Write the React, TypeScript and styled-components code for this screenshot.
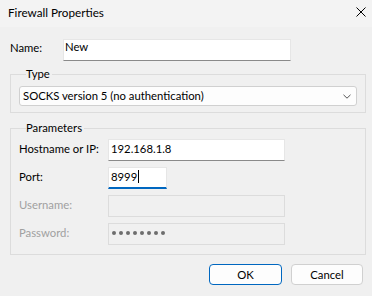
import React from "react";
import styled, { createGlobalStyle } from "styled-components";

const Global = createGlobalStyle`
  html, body { margin: 0; padding: 0; background: #f0f0f0; }
  * { box-sizing: border-box; }
  body { font-family: Lato, "Noto Sans", sans-serif; font-size: 11.3px; color: #000; }
`;

const Window = styled.div`
  width: 372px;
  height: 296px;
  background: #f0f0f0;
  display: flex;
  flex-direction: column;
  overflow: hidden;
`;

const TitleBar = styled.div`
  height: 27px;
  background: #f3f3f3;
  display: flex;
  align-items: center;
  justify-content: space-between;
  padding: 0 6px 4px 8px;
  font-size: 11.7px;
`;

const Body = styled.div`
  display: flex;
  flex-direction: column;
  padding: 12px 6px 0 10px;
`;

const NameRow = styled.div`
  display: flex;
  align-items: flex-start;
`;

const Label = styled.span<{ $w: number; $disabled?: boolean; $offset?: number }>`
  width: ${(p) => p.$w}px;
  flex: none;
  color: ${(p) => (p.$disabled ? "#a0a0a0" : "#000")};
  line-height: 14px;
  white-space: nowrap;
  padding-top: ${(p) => p.$offset ?? 0}px;
  padding-bottom: ${(p) => (p.$offset === undefined ? 2 : 0)}px;
`;

const TextBox = styled.div<{ $w: number; $disabled?: boolean; $focus?: boolean; $top?: boolean }>`
  width: ${(p) => p.$w}px;
  height: 22px;
  flex: none;
  display: flex;
  align-items: ${(p) => (p.$top ? "flex-start" : "center")};
  padding: ${(p) => (p.$top ? "0 1px" : "0 2px 2px 2px")};
  background: ${(p) => (p.$disabled ? "#f0f0f0" : "#fff")};
  border: 1px solid ${(p) => (p.$disabled ? "#dcdcdc" : "#e6e6e6")};
  border-bottom: ${(p) =>
    p.$focus ? "2px solid #0067c0" : p.$disabled ? "1px solid #dcdcdc" : "1px solid #8a8a8a"};
  color: #000;
  line-height: 14px;
  white-space: nowrap;
`;

const Caret = styled.span`
  display: inline-block;
  width: 1px;
  height: 13px;
  background: #000;
  margin-left: 1px;
`;

const Group = styled.fieldset<{ $mt: number }>`
  margin: ${(p) => p.$mt}px 0 0 0;
  padding: 0 8px 6px 8px;
  border: 1px solid #dcdcdc;
  min-width: 0;
`;

const Legend = styled.legend`
  padding: 0 2px 0 0;
  margin-left: 7px;
  line-height: 14px;
  height: 14px;
`;

const Combo = styled.div`
  margin-top: 5px;
  height: 20px;
  background: #fdfdfd;
  border: 1px solid #d0d0d0;
  border-radius: 3px;
  display: flex;
  align-items: center;
  justify-content: space-between;
  padding: 0 5px 0 3px;
  line-height: 14px;
`;

const ParamGrid = styled.div`
  margin-top: 4px;
  padding-bottom: 3px;
  display: flex;
  flex-direction: column;
  gap: 6px;
`;

const ParamRow = styled.div`
  display: flex;
  align-items: center;
`;

const Dots = styled.span`
  display: flex;
  gap: 3px;
  padding-left: 1px;
`;

const Dot = styled.span`
  width: 4px;
  height: 4px;
  border-radius: 50%;
  background: #6d6d6d;
`;

const Buttons = styled.div`
  display: flex;
  justify-content: flex-end;
  gap: 9px;
  padding: 9px 3px 0 0;
`;

const Button = styled.button<{ $primary?: boolean }>`
  width: ${(p) => (p.$primary ? 73 : 72)}px;
  height: 21px;
  font-family: inherit;
  font-size: 11.3px;
  color: #000;
  background: #fdfdfd;
  border: 1px solid ${(p) => (p.$primary ? "#0067c0" : "#d0d0d0")};
  border-radius: 4px;
  padding: 0;
  line-height: 14px;
`;

export default function App() {
  return (
    <>
      <Global />
      <Window>
        <TitleBar>
          <span>Firewall Properties</span>
          <svg width="10" height="10" viewBox="0 0 10 10">
            <path d="M0.5 0.5 L9.5 9.5 M9.5 0.5 L0.5 9.5" stroke="#000" strokeWidth="1" />
          </svg>
        </TitleBar>
        <Body>
          <NameRow>
            <Label $w={53} $offset={2}>Name:</Label>
            <TextBox $w={228} $top>New</TextBox>
          </NameRow>
          <Group $mt={6}>
            <Legend>Type</Legend>
            <Combo>
              <span>SOCKS version 5 (no authentication)</span>
              <svg width="8" height="5" viewBox="0 0 8 5">
                <path d="M0.5 0.8 L4 4.2 L7.5 0.8" stroke="#555" strokeWidth="1" fill="none" />
              </svg>
            </Combo>
          </Group>
          <Group $mt={8}>
            <Legend>Parameters</Legend>
            <ParamGrid>
              <ParamRow>
                <Label $w={89}>Hostname or IP:</Label>
                <TextBox $w={177}>192.168.1.8</TextBox>
              </ParamRow>
              <ParamRow>
                <Label $w={89}>Port:</Label>
                <TextBox $w={59} $focus>
                  8999<Caret />
                </TextBox>
              </ParamRow>
              <ParamRow>
                <Label $w={89} $disabled>Username:</Label>
                <TextBox $w={177} $disabled />
              </ParamRow>
              <ParamRow>
                <Label $w={89} $disabled>Password:</Label>
                <TextBox $w={177} $disabled>
                  <Dots>
                    {Array.from({ length: 8 }).map((_, i) => (
                      <Dot key={i} />
                    ))}
                  </Dots>
                </TextBox>
              </ParamRow>
            </ParamGrid>
          </Group>
          <Buttons>
            <Button $primary>OK</Button>
            <Button>Cancel</Button>
          </Buttons>
        </Body>
      </Window>
    </>
  );
}
